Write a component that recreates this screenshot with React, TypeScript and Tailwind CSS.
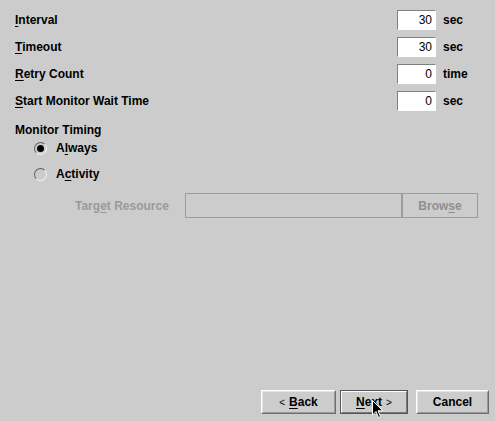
import React from "react";

const font = { fontFamily: '"Liberation Sans", Arial, sans-serif' };

type FieldRowProps = {
  label: string;
  mnemonic: number;
  value: string;
  unit: string;
};

function Mnemonic({ text, index }: { text: string; index: number }) {
  if (index < 0) return <>{text}</>;
  return (
    <>
      {text.slice(0, index)}
      <span className="underline underline-offset-2 decoration-1">{text[index]}</span>
      {text.slice(index + 1)}
    </>
  );
}

function FieldRow({ label, mnemonic, value, unit }: FieldRowProps) {
  return (
    <div className="h-[27px] flex items-center justify-between pl-[15px] pr-[13px]">
      <span className="font-bold text-[12px] text-black">
        <Mnemonic text={label} index={mnemonic} />
      </span>
      <div className="flex items-center">
        <div className="w-[39px] h-[20px] bg-white border border-t-[#808080] border-l-[#808080] border-b-white border-r-white flex items-center justify-end pr-[3px] text-[12px] text-black">
          {value}
        </div>
        <span className="w-[46px] pl-[7px] font-bold text-[12px] text-black">{unit}</span>
      </div>
    </div>
  );
}

function Radio({ label, mnemonic, checked }: { label: string; mnemonic: number; checked?: boolean }) {
  return (
    <div className="h-[20px] flex items-center pl-[34px] gap-[9px]">
      <div className="w-[13px] h-[13px] rounded-full bg-[#cccccc] border border-t-[#5e5e5e] border-l-[#5e5e5e] border-b-[#f4f4f4] border-r-[#f4f4f4] flex items-center justify-center">
        {checked && <div className="w-[7px] h-[7px] rounded-full bg-black" />}
      </div>
      <span className="font-bold text-[12px] text-black">
        <Mnemonic text={label} index={mnemonic} />
      </span>
    </div>
  );
}

function Button({
  children,
  width,
  focused,
}: {
  children: React.ReactNode;
  width: string;
  focused?: boolean;
}) {
  return (
    <div
      className={`${width} h-[24px] ${
        focused ? "border border-[#555555]" : "border border-t-white border-l-white border-b-[#6e6e6e] border-r-[#6e6e6e]"
      } bg-[#cccccc] flex`}
    >
      <div
        className={`flex-1 flex items-center justify-center font-bold text-[12px] text-black ${
          focused ? "border border-t-white border-l-white border-b-[#7a7a7a] border-r-[#7a7a7a]" : "border border-t-[#e4e4e4] border-l-[#e4e4e4] border-b-[#9a9a9a] border-r-[#9a9a9a]"
        }`}
      >
        {children}
      </div>
    </div>
  );
}

export default function App() {
  return (
    <div className="relative w-[495px] h-[421px] bg-[#cccccc] flex flex-col overflow-hidden" style={font}>
      <div className="pt-[6px]">
        <FieldRow label="Interval" mnemonic={0} value="30" unit="sec" />
        <FieldRow label="Timeout" mnemonic={0} value="30" unit="sec" />
        <FieldRow label="Retry Count" mnemonic={0} value="0" unit="time" />
        <FieldRow label="Start Monitor Wait Time" mnemonic={0} value="0" unit="sec" />
      </div>

      <div className="mt-[8px] h-[16px] flex items-center pl-[15px] font-bold text-[12px] text-black">
        Monitor Timing
      </div>
      <Radio label="Always" mnemonic={1} checked />
      <div className="mt-[6px]">
        <Radio label="Activity" mnemonic={1} />
      </div>

      <div className="mt-[9px] h-[25px] flex items-center pl-[75px]">
        <span className="w-[110px] font-bold text-[12px] text-[#9a9a9a]">
          <Mnemonic text="Target Resource" index={4} />
        </span>
        <div className="w-[217px] h-[25px] border border-[#9c9c9c] bg-[#cccccc]" />
        <div className="w-[76px] h-[25px] border border-[#9c9c9c] flex items-center justify-center font-bold text-[12px] text-[#8f8f8f]">
          <Mnemonic text="Browse" index={4} />
        </div>
      </div>

      <div className="flex-1" />

      <div className="flex justify-end items-center pr-[6px] mb-[7px]">
        <Button width="w-[75px]">
          <span className="font-normal text-[10px] mr-[4px]">&lt;</span>
          <Mnemonic text="Back" index={0} />
        </Button>
        <div className="ml-[4px]">
          <Button width="w-[68px]" focused>
            <Mnemonic text="Next" index={0} />
            <span className="font-normal text-[10px] ml-[4px]">&gt;</span>
          </Button>
        </div>
        <div className="ml-[8px]">
          <Button width="w-[73px]">Cancel</Button>
        </div>
      </div>

      <svg className="absolute left-[372px] top-[400px]" width="13" height="20" viewBox="0 0 13 20">
        <path d="M0.5 0.5 L0.5 15 L4 11.5 L6.5 17.5 L8.5 16.5 L6 10.8 L10.8 10.8 Z" fill="black" stroke="white" strokeWidth="1" />
      </svg>
    </div>
  );
}
